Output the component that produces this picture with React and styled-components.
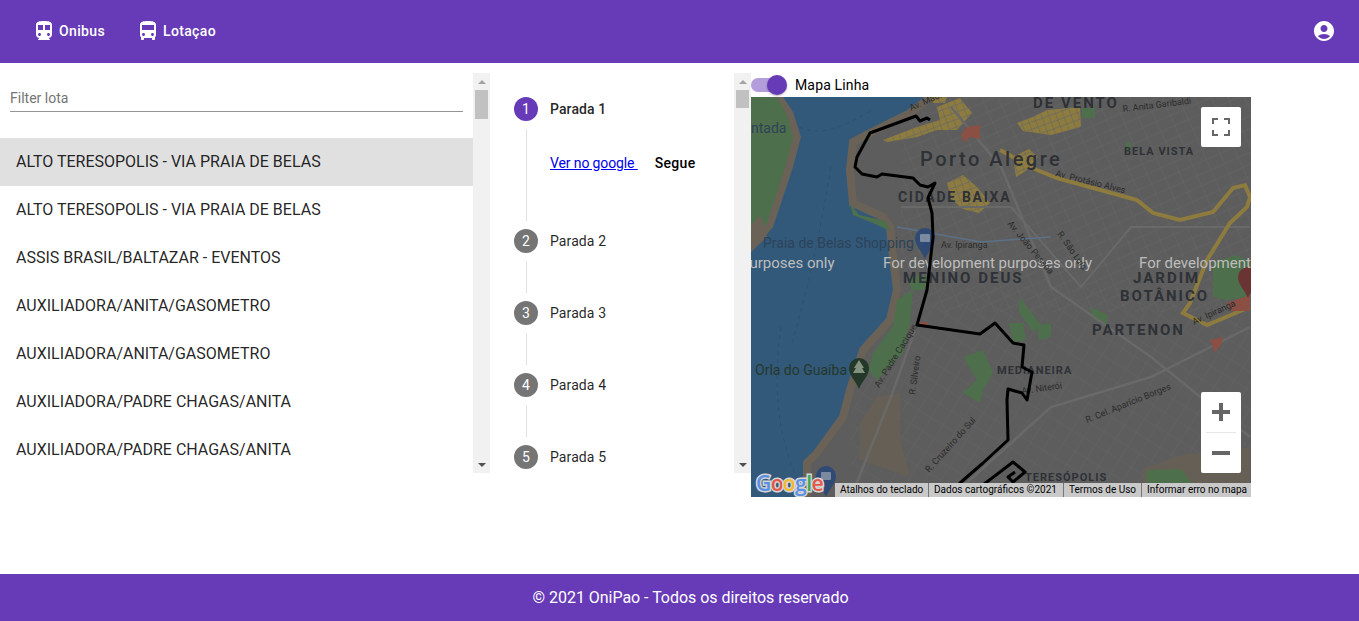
import styled, { createGlobalStyle } from 'styled-components'
import { MdDirectionsSubway, MdDirectionsBus, MdAccountCircle } from 'react-icons/md'

const purple = '#673ab7'

const GlobalStyle = createGlobalStyle`
  html, body { margin: 0; padding: 0; height: 100%; }
  body { font-family: Roboto, "Liberation Sans", sans-serif; background: #fff; overflow: hidden; }
  #root { height: 100%; }
`

const Page = styled.div`
  height: 621px;
  display: flex;
  flex-direction: column;
`

const TopBar = styled.header`
  height: 63px;
  flex: none;
  background: ${purple};
  color: #fff;
  display: flex;
  align-items: center;
  padding: 0 23px 2px 32px;
  box-sizing: border-box;
`

const NavButton = styled.a`
  display: flex;
  align-items: center;
  gap: 3px;
  width: 104px;
  font-size: 14px;
  font-weight: 500;
  letter-spacing: 0.35px;
  & svg { font-size: 24px; }
`

const AccountIcon = styled(MdAccountCircle)`
  margin-left: auto;
  font-size: 24px;
`

const Main = styled.main`
  flex: 1;
  display: flex;
  align-items: flex-start;
  padding-top: 10px;
`

const ScrollColumn = styled.section`
  flex: none;
  width: ${p => p.$width}px;
  height: 400px;
  display: flex;
`

const ColumnBody = styled.div`
  flex: 1;
  min-width: 0;
  overflow: hidden;
`

const ScrollBar = styled.div`
  flex: none;
  width: 17px;
  background: #f1f1f1;
  display: flex;
  flex-direction: column;
`

const ScrollArrow = styled.span`
  height: 17px;
  flex: none;
  display: flex;
  align-items: center;
  justify-content: center;
  &::before {
    content: '';
    border-left: 4px solid transparent;
    border-right: 4px solid transparent;
    border-bottom: ${p => (p.$down ? '0' : '4px solid #a3a3a3')};
    border-top: ${p => (p.$down ? '4px solid #505050' : '0')};
  }
`

const ScrollTrack = styled.span`
  flex: 1;
  padding: 0 2px;
`

const ScrollThumb = styled.span`
  display: block;
  height: ${p => p.$height}px;
  background: #c1c1c1;
`

const FilterBox = styled.div`
  padding: 13px 10px 26px;
`

const FilterInput = styled.input`
  display: block;
  width: 100%;
  box-sizing: border-box;
  height: 26px;
  border: none;
  border-bottom: 1px solid #949494;
  outline: none;
  padding: 0 0 2px;
  font-family: inherit;
  font-size: 14px;
  color: #333;
  &::placeholder { color: #757575; opacity: 1; }
`

const LineItem = styled.div`
  height: 48px;
  box-sizing: border-box;
  display: flex;
  align-items: center;
  padding: 0 0 2px 16px;
  font-size: 16px;
  color: rgba(0, 0, 0, 0.87);
  background: ${p => (p.$selected ? '#e0e0e0' : 'transparent')};
`

const Stepper = styled.div`
  padding: 24px;
`

const StepRow = styled.div`
  display: flex;
  align-items: center;
  gap: 12px;
  height: 24px;
`

const StepCircle = styled.span`
  width: 24px;
  height: 24px;
  border-radius: 50%;
  flex: none;
  display: flex;
  align-items: center;
  justify-content: center;
  background: ${p => (p.$active ? purple : '#757575')};
  color: #fff;
  font-size: 14px;
`

const StepLabel = styled.span`
  font-size: 14px;
  letter-spacing: 0.1px;
  font-weight: ${p => (p.$active ? 500 : 400)};
  color: rgba(0, 0, 0, 0.87);
`

const StepRail = styled.div`
  margin: 8px 0 8px 12px;
  min-height: 32px;
  border-left: 1px solid #e0e0e0;
  padding-left: 23px;
`

const StepDetail = styled.div`
  height: 92px;
  box-sizing: border-box;
  padding-top: 26px;
  display: flex;
  gap: 17px;
  font-size: 14px;
  line-height: 16px;
  white-space: nowrap;
`

const MapsLink = styled.a`
  color: #0000ee;
  text-decoration: underline;
  letter-spacing: -0.12px;
`

const SegueButton = styled.span`
  color: #000;
  font-weight: 500;
  letter-spacing: 0.3px;
`

const MapColumn = styled.section`
  flex: none;
  width: 500px;
`

const SwitchRow = styled.div`
  height: 24px;
  display: flex;
  align-items: center;
  gap: 10px;
  font-size: 14px;
  letter-spacing: 0.15px;
  color: #000;
`

const SwitchTrack = styled.span`
  position: relative;
  width: 34px;
  height: 14px;
  border-radius: 7px;
  background: #b39ddb;
`

const SwitchThumb = styled.span`
  position: absolute;
  left: 16px;
  top: -3px;
  width: 20px;
  height: 20px;
  border-radius: 50%;
  background: ${purple};
  box-shadow: 0 1px 2px rgba(0, 0, 0, 0.3);
`

const MapFrame = styled.div`
  position: relative;
  width: 500px;
  height: 400px;
  overflow: hidden;
  background: #5d5d5d;
  & > svg.map { display: block; }
`

const MapControl = styled.div`
  position: absolute;
  right: 10px;
  width: 40px;
  background: #fff;
  display: flex;
  flex-direction: column;
  align-items: center;
  justify-content: center;
  border-radius: 2px;
`

const FullscreenControl = styled(MapControl)`
  top: 10px;
  height: 40px;
`

const ZoomControl = styled(MapControl)`
  top: 295px;
  height: 81px;
`

const ZoomDivider = styled.span`
  width: 30px;
  height: 1px;
  background: #e6e6e6;
`

const ZoomButton = styled.span`
  height: 40px;
  display: flex;
  align-items: center;
  justify-content: center;
`

const Attribution = styled.div`
  position: absolute;
  right: 0;
  bottom: 0;
  width: 416px;
  height: 14px;
  display: flex;
  background: #c9c9c9;
  color: #000;
  font-size: 10px;
  line-height: 14px;
  white-space: nowrap;
`

const AttributionItem = styled.span`
  width: ${p => p.$width}px;
  flex: none;
  box-sizing: border-box;
  padding-left: 5px;
  border-left: ${p => (p.$first ? 'none' : '1px solid #777')};
`

const GoogleLogo = styled.div`
  position: absolute;
  left: 5px;
  bottom: 2px;
  font-family: "Open Sans", Roboto, sans-serif;
  font-size: 21px;
  font-weight: 600;
  letter-spacing: -0.6px;
  line-height: 24px;
  -webkit-text-stroke: 3px #d5d5d5;
  paint-order: stroke fill;
`

const GoogleLetter = styled.span`
  color: ${p => p.$color};
`

const Footer = styled.footer`
  height: 47px;
  flex: none;
  background: #673ab7;
  color: #fff;
  display: flex;
  align-items: center;
  justify-content: center;
  padding-left: 22px;
  font-size: 16px;
  letter-spacing: -0.03px;
`

const lines = [
  'ALTO TERESOPOLIS - VIA PRAIA DE BELAS',
  'ALTO TERESOPOLIS - VIA PRAIA DE BELAS',
  'ASSIS BRASIL/BALTAZAR - EVENTOS',
  'AUXILIADORA/ANITA/GASOMETRO',
  'AUXILIADORA/ANITA/GASOMETRO',
  'AUXILIADORA/PADRE CHAGAS/ANITA',
  'AUXILIADORA/PADRE CHAGAS/ANITA',
]
const stops = [1, 2, 3, 4, 5]

const labelStyles = {
  city: { fontSize: 20, fontWeight: 500, letterSpacing: 2.5, fill: '#2e3136' },
  center: { fontSize: 14, fontWeight: 700, letterSpacing: 1.7, fill: '#2e3136' },
  district: { fontSize: 15, fontWeight: 700, letterSpacing: 2, fill: '#2e3136' },
  small: { fontSize: 11, fontWeight: 700, letterSpacing: 1, fill: '#2e3136' },
  place: { fontSize: 14, fontWeight: 400, fill: '#2c4359' },
  park: { fontSize: 14, fontWeight: 400, fill: '#24382a' },
  notice: { fontSize: 15, fontWeight: 400, fill: '#bdbdbd' },
  road: { fontSize: 9, fontWeight: 400, fill: '#2b2b2b' },
}

const labels = [
  ['Porto Alegre', 169, 69, 'city'],
  ['DE VENTO', 282, 11, 'district'],
  ['CIDADE BAIXA', 147, 105, 'center'],
  ['BELA VISTA', 373, 58, 'small'],
  ['MENINO DEUS', 152, 186, 'district'],
  ['JARDIM', 382, 186, 'district'],
  ['BOTÂNICO', 369, 204, 'district'],
  ['PARTENON', 341, 238, 'district'],
  ['MEDIANEIRA', 246, 277, 'small'],
  ['TERESÓPOLIS', 274, 384, 'small'],
  ['ntada', 0, 36, 'place'],
  ['Praia de Belas Shopping', 12, 151, 'place'],
  ['Orla do Guaíba', 4, 278, 'park'],
  ['purposes only', -10, 171, 'notice'],
  ['For development purposes only', 132, 171, 'notice'],
  ['For development purposes only', 388, 171, 'notice'],
  ['Av. Ipiranga', 190, 151, 'road'],
  ['Av. Mauá', 160, 14, 'road', -24],
  ['Av. Protásio Alves', 304, 79, 'road', 14],
  ['R. Anita Garibaldi', 372, 15, 'road', -7],
  ['Av. João Pessoa', 256, 127, 'road', 50],
  ['R. São Luís', 306, 137, 'road', 55],
  ['Av. Padre Cacique', 128, 291, 'road', -58],
  ['R. Silveiro', 164, 298, 'road', -82],
  ['R. Cruzeiro do Sul', 178, 376, 'road', -48],
  ['Av. Niterói', 271, 297, 'road', -8],
  ['R. Cel. Aparício Borges', 336, 326, 'road', -22],
  ['Av. Ipiranga', 443, 228, 'road', -25],
]

const yellowBlocks = [
  '132,43 166,30 189,23 186,10 209,1 221,16 206,33 186,33 166,40 136,45',
  '196,86 212,78 226,90 239,106 228,116 212,112 200,102',
  '266,26 282,20 296,13 329,10 330,30 300,38 272,34',
  '262,60 278,52 287,60 275,74 265,80',
  '180,0 196,0 194,6 182,6',
]

const greens = [
  '146,203 162,193 159,226 152,256 126,283 117,273 122,256 142,229',
  '212,260 232,253 242,276 232,293 229,306 212,296 226,283',
  '99,106 108,118 135,124 139,134 122,126 102,118',
  '158,180 175,178 178,193 160,193',
  '331,11 344,11 344,21 331,21',
  '268,200 280,215 290,228 282,235 268,215',
  '258,226 272,226 275,243 262,245',
  '286,228 300,226 300,240 288,243',
  '339,210 357,218 355,228 342,222',
  '462,165 486,158 499,165 499,200 476,203 462,200',
  '396,373 430,372 442,387 396,387',
  '375,45 380,45 380,54 375,54',
]

const route =
  '179,23 176,21 169,24 165,19 119,36 106,60 104,70 111,77 126,80 131,77 162,81 169,88 177,90 184,86 177,101 181,116 182,140 176,193 166,228 229,237 244,226 262,246 273,248 271,270 281,275 276,303 271,296 257,292 256,303 257,343 232,366 209,386 195,400'

const routeTail = '216,400 249,375 262,365 274,375 262,385 257,380 264,375'

function Pin({ x, y, color, children }) {
  return (
    <g transform={`translate(${x} ${y})`}>
      <path d="M0 21 C-3 13 -10 8 -10 0 A10 10 0 0 1 10 0 C10 8 3 13 0 21Z" fill={color} />
      {children}
    </g>
  )
}

function CityMap() {
  return (
    <svg className="map" width="500" height="400" viewBox="0 0 500 400">
      <defs>
        <pattern id="blocks" width="15" height="11" patternUnits="userSpaceOnUse" patternTransform="rotate(-24)">
          <path d="M0 0H15M0 0V11" stroke="#666" strokeWidth="1" fill="none" />
        </pattern>
        <pattern id="blocks2" width="14" height="16" patternUnits="userSpaceOnUse" patternTransform="rotate(32)">
          <path d="M0 0H14M0 0V16" stroke="#646464" strokeWidth="1" fill="none" />
        </pattern>
        <pattern id="cuts" width="7" height="7" patternUnits="userSpaceOnUse" patternTransform="rotate(-20)">
          <path d="M0 0H7M0 0V7" stroke="#6a6a62" strokeWidth="1.4" fill="none" />
        </pattern>
      </defs>
      <rect width="500" height="400" fill="#5d5d5d" />
      <rect x="150" width="350" height="215" fill="url(#blocks)" />
      <rect x="100" y="190" width="400" height="210" fill="url(#blocks2)" />

      <polygon points="392,372 430,358 499,350 499,400 392,400" fill="#665f55" />
      <polygon points="109,326 126,300 149,296 149,343 159,380 109,363" fill="#665f55" />

      <polygon
        points="206,-20 159,16 119,36 102,45 99,73 102,106 132,120 139,130 142,160 146,193 139,223 112,253 99,293 92,320 66,356 56,366 56,420 -20,420 -20,-20"
        fill="#33597a"
        stroke="#6a6257"
        strokeWidth="8"
      />
      <polygon points="0,0 32,0 42,15 50,40 42,70 22,130 0,155" fill="#6a6257" />
      <polygon points="0,0 26,0 36,18 42,40 34,70 16,126 0,148" fill="#4e6f4b" />
      <polygon points="0,128 10,118 16,140 0,155" fill="#6a6257" />
      <path d="M48 30 C70 40 90 30 120 14 M80 70 C70 130 60 180 40 250 M30 230 C20 300 30 350 50 390" stroke="#2e4f6c" strokeDasharray="4 4" fill="none" />

      {greens.map(points => <polygon key={points} points={points} fill="#4e6f4b" />)}
      {yellowBlocks.map(points => (
        <g key={points}>
          <polygon points={points} fill="#8e7b3e" />
          <polygon points={points} fill="url(#cuts)" />
        </g>
      ))}

      <path d="M200 10 L250 70 L300 190 L400 260 L499 340" stroke="#696969" strokeWidth="2.5" fill="none" />
      <path d="M150 110 H260 L330 190 L380 130 L499 130" stroke="#696969" strokeWidth="2" fill="none" />
      <path d="M100 400 L140 300 L165 230 M200 400 L300 310 L400 280 L499 230" stroke="#696969" strokeWidth="2.5" fill="none" />
      <path d="M146 130 L230 145 L300 140" stroke="#5c7187" strokeWidth="1.5" fill="none" />
      <path
        d="M249 53 L286 73 L306 81 L386 103 L402 116 L429 123 L462 115 L482 91 L494 88 L499 100 L496 110 L479 126 L456 163 L439 206 L432 216 L456 228 L499 210"
        stroke="#8e7b3e"
        strokeWidth="4"
        fill="none"
      />

      <polygon points="210,38 216,30 229,28 229,42 218,40 214,46" fill="#8c4f44" />
      <polygon points="459,243 472,240 470,248 464,255" fill="#8c4f44" />
      <polygon points="476,206 499,198 499,214 480,214" fill="#8c4f44" />
      <polygon points="166,225 176,225 178,229 166,229" fill="#8c4f44" />

      <Pin x={174} y={141} color="#2f4b75">
        <rect x="-5" y="-4" width="10" height="8" rx="1" fill="#7c8aa0" />
      </Pin>
      <Pin x={108} y={271} color="#24382a">
        <polygon points="0,-8 5,0 3,0 6,5 -6,5 -3,0 -5,0" fill="#83917f" />
      </Pin>
      <Pin x={75} y={379} color="#2f4b75">
        <rect x="-5" y="-4" width="10" height="8" rx="1" fill="#7c8aa0" />
      </Pin>
      <Pin x={497} y={180} color="#6b3434" />

      {labels.map(([text, x, y, kind, angle]) => (
        <text
          key={text + x}
          x={x}
          y={y}
          style={labelStyles[kind]}
          transform={angle ? `rotate(${angle} ${x} ${y})` : undefined}
        >
          {text}
        </text>
      ))}

      <polyline points={route} fill="none" stroke="#000" strokeWidth="3" strokeLinejoin="round" />
      <polyline points={routeTail} fill="none" stroke="#000" strokeWidth="3" strokeLinejoin="round" />
    </svg>
  )
}

function FakeScrollBar({ thumb }) {
  return (
    <ScrollBar>
      <ScrollArrow />
      <ScrollTrack><ScrollThumb $height={thumb} /></ScrollTrack>
      <ScrollArrow $down />
    </ScrollBar>
  )
}

export default function App() {
  return (
    <Page>
      <GlobalStyle />
      <TopBar>
        <NavButton><MdDirectionsSubway /> Onibus</NavButton>
        <NavButton><MdDirectionsBus /> Lotaçao</NavButton>
        <AccountIcon />
      </TopBar>

      <Main>
        <ScrollColumn $width={490}>
          <ColumnBody>
            <FilterBox>
              <FilterInput placeholder="Filter lota" />
            </FilterBox>
            {lines.map((name, i) => (
              <LineItem key={i} $selected={i === 0}>{name}</LineItem>
            ))}
          </ColumnBody>
          <FakeScrollBar thumb={29} />
        </ScrollColumn>

        <ScrollColumn $width={261}>
          <ColumnBody>
            <Stepper>
              {stops.map(n => (
                <div key={n}>
                  <StepRow>
                    <StepCircle $active={n === 1}>{n}</StepCircle>
                    <StepLabel $active={n === 1}>Parada {n}</StepLabel>
                  </StepRow>
                  {n < 5 && (
                    <StepRail>
                      {n === 1 && (
                        <StepDetail>
                          <MapsLink href="#">Ver no google&nbsp;</MapsLink>
                          <SegueButton>Segue</SegueButton>
                        </StepDetail>
                      )}
                    </StepRail>
                  )}
                </div>
              ))}
            </Stepper>
          </ColumnBody>
          <FakeScrollBar thumb={18} />
        </ScrollColumn>

        <MapColumn>
          <SwitchRow>
            <SwitchTrack><SwitchThumb /></SwitchTrack>
            Mapa Linha
          </SwitchRow>
          <MapFrame>
            <CityMap />
            <FullscreenControl>
              <svg width="18" height="18" viewBox="0 0 18 18">
                <path d="M0 6V0H6V2H2V6ZM12 0H18V6H16V2H12ZM18 12V18H12V16H16V12ZM6 18H0V12H2V16H6Z" fill="#666" />
              </svg>
            </FullscreenControl>
            <ZoomControl>
              <ZoomButton>
                <svg width="18" height="18" viewBox="0 0 18 18">
                  <path d="M0 7H7V0H11V7H18V11H11V18H7V11H0Z" fill="#666" />
                </svg>
              </ZoomButton>
              <ZoomDivider />
              <ZoomButton>
                <svg width="18" height="18" viewBox="0 0 18 18">
                  <path d="M0 7H18V11H0Z" fill="#666" />
                </svg>
              </ZoomButton>
            </ZoomControl>
            <GoogleLogo>
              <GoogleLetter $color="#5a8fe6">G</GoogleLetter>
              <GoogleLetter $color="#e4574a">o</GoogleLetter>
              <GoogleLetter $color="#f2b92f">o</GoogleLetter>
              <GoogleLetter $color="#5a8fe6">g</GoogleLetter>
              <GoogleLetter $color="#3aa757">l</GoogleLetter>
              <GoogleLetter $color="#e4574a">e</GoogleLetter>
            </GoogleLogo>
            <Attribution>
              <AttributionItem $first $width={93}>Atalhos do teclado</AttributionItem>
              <AttributionItem $width={135}>Dados cartográficos ©2021</AttributionItem>
              <AttributionItem $width={78}>Termos de Uso</AttributionItem>
              <AttributionItem $width={110}>Informar erro no mapa</AttributionItem>
            </Attribution>
          </MapFrame>
        </MapColumn>
      </Main>

      <Footer>© 2021 OniPao - Todos os direitos reservado</Footer>
    </Page>
  )
}
